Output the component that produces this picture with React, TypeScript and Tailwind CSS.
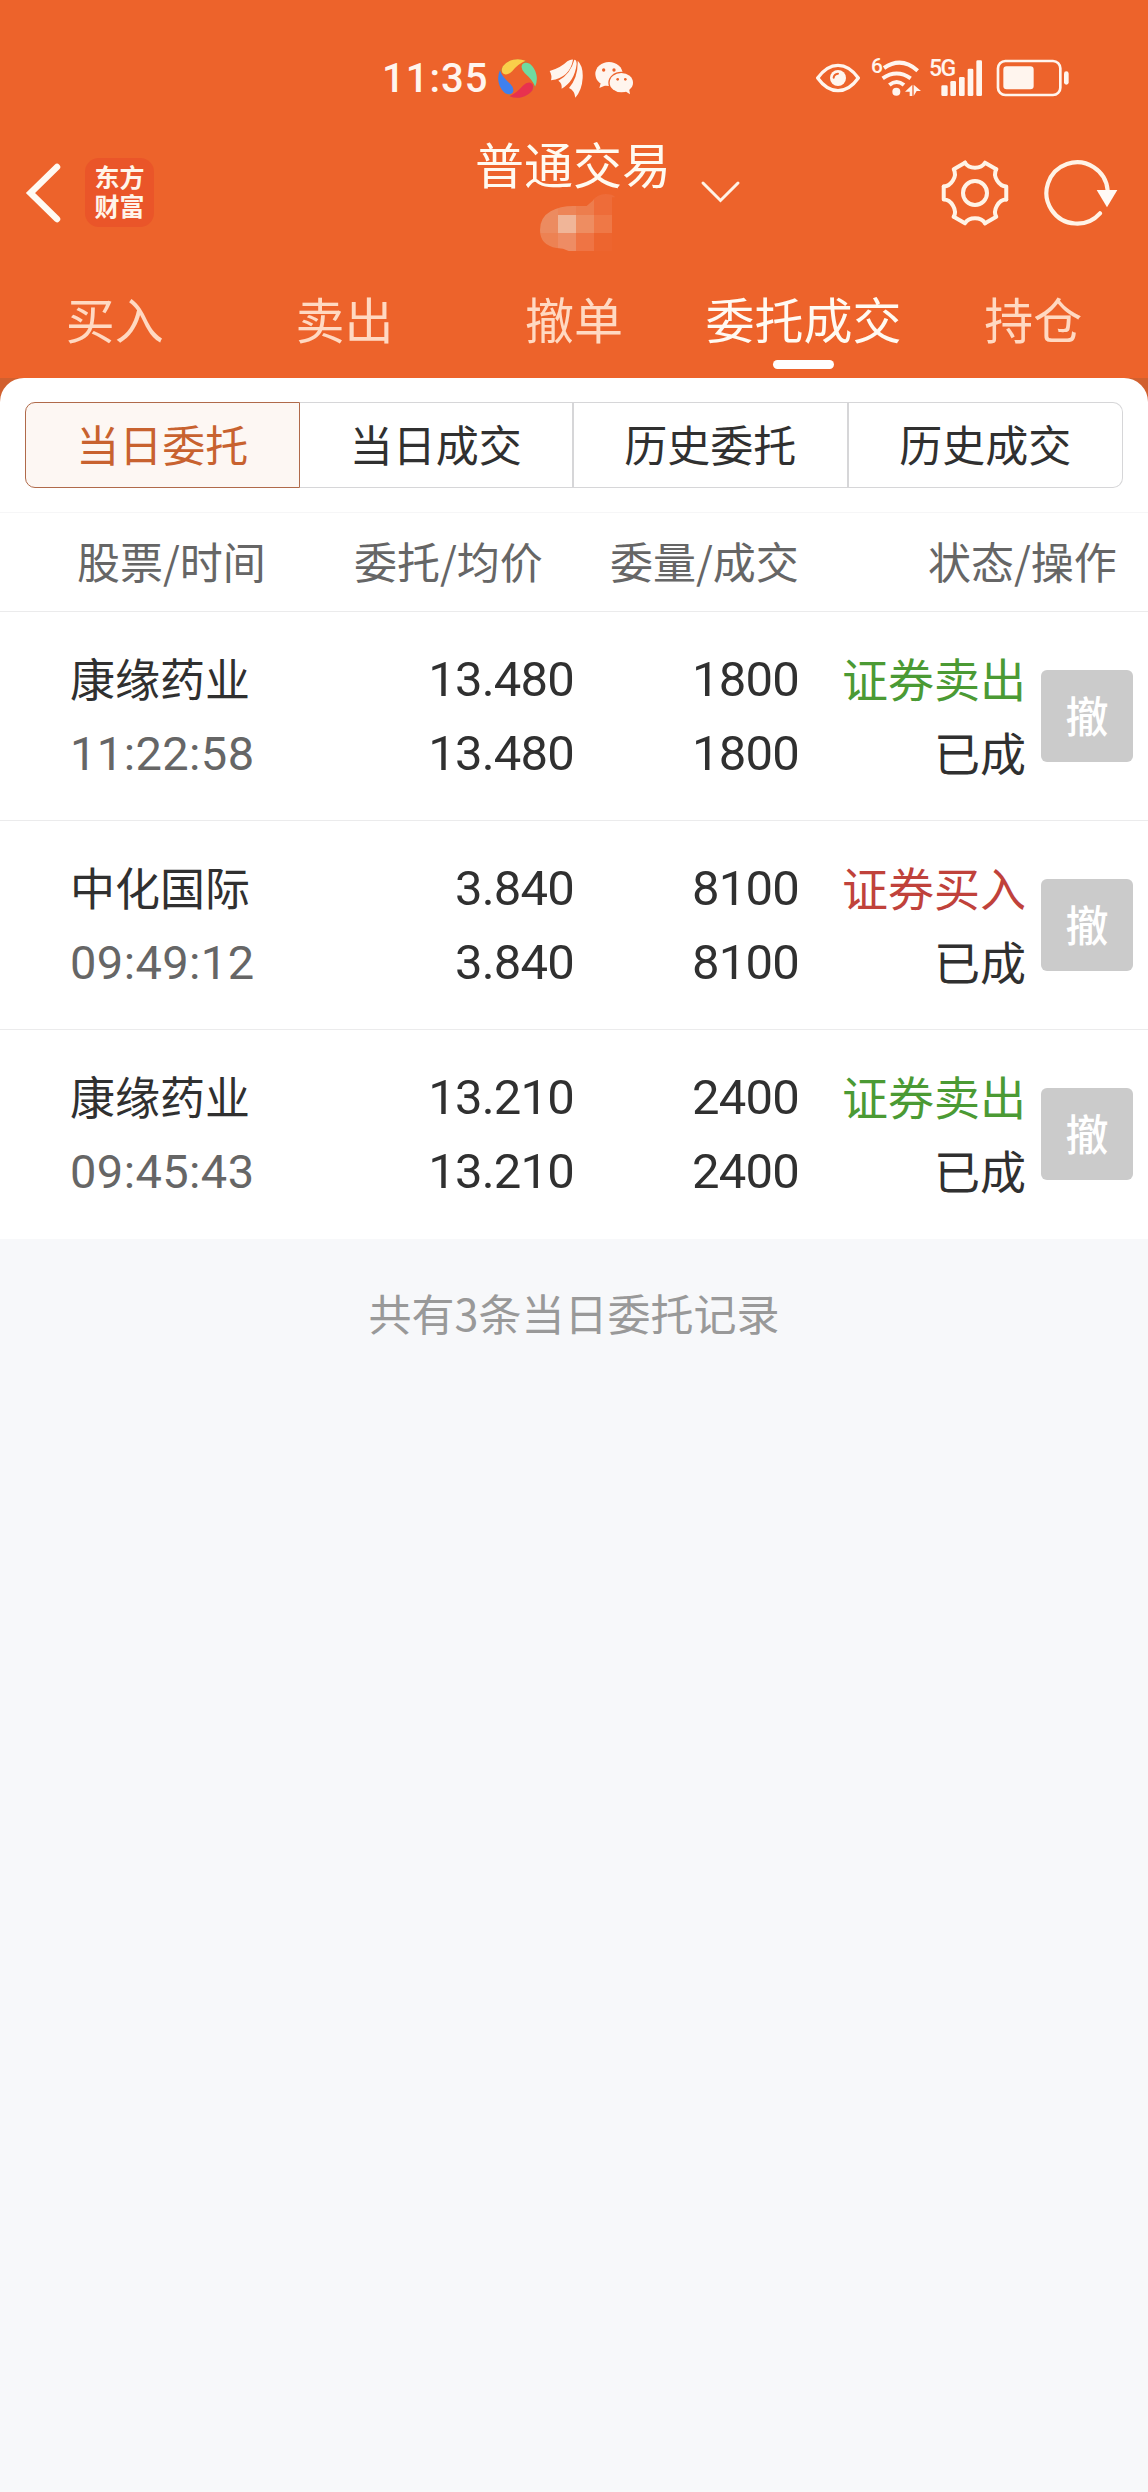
import React from 'react'

import clsx from 'clsx'

interface Order {
  name: string
  time: string
  price: string
  avgPrice: string
  amount: string
  filled: string
  side: 'sell' | 'buy'
  status: string
}

const TABS = ['买入', '卖出', '撤单', '委托成交', '持仓']
const SEGMENTS = ['当日委托', '当日成交', '历史委托', '历史成交']

const ORDERS: Order[] = [
  {
    name: '康缘药业',
    time: '11:22:58',
    price: '13.480',
    avgPrice: '13.480',
    amount: '1800',
    filled: '1800',
    side: 'sell',
    status: '已成'
  },
  {
    name: '中化国际',
    time: '09:49:12',
    price: '3.840',
    avgPrice: '3.840',
    amount: '8100',
    filled: '8100',
    side: 'buy',
    status: '已成'
  },
  {
    name: '康缘药业',
    time: '09:45:43',
    price: '13.210',
    avgPrice: '13.210',
    amount: '2400',
    filled: '2400',
    side: 'sell',
    status: '已成'
  }
]

function SwirlIcon() {
  const petal =
    'M24 -53 A58 58 0 0 0 -44 -37 Q-51 -20 -42 -14 Q-30 -8 -16 -22 Q4 -45 24 -53Z'
  return (
    <svg width="39" height="39" viewBox="-58.5 -58.5 117 117">
      <circle r="55" fill="none" stroke="#c9753a" strokeWidth="5" />
      <path d={petal} fill="#f9cf4a" />
      <path d={petal} fill="#6fdba0" transform="rotate(90)" />
      <path d={petal} fill="#e8314f" transform="rotate(180)" />
      <path d={petal} fill="#3f80ee" transform="rotate(270)" />
    </svg>
  )
}

function WingIcon() {
  return (
    <svg width="34" height="39" viewBox="537 41 102 117" fill="#fff5ee">
      <path d="M539 77 Q572 68 592 48 Q602 42 609 43 Q600 96 543 105 Q547 91 539 77Z" />
      <path d="M613 43 Q620 43 620 56 Q614 108 575 130 Q577 114 565 106 Q602 86 613 43Z" />
      <path d="M623 46 Q640 62 638 98 Q636 134 616 157 Q614 136 597 128 Q625 96 623 46Z" />
    </svg>
  )
}

function WechatIcon() {
  return (
    <svg width="39" height="34" viewBox="674 48 117 102" fill="#fff5ee">
      <ellipse cx="716" cy="87" rx="41" ry="36" />
      <path d="M692 112 L687 129 L710 119Z" />
      <ellipse cx="753" cy="113" rx="39" ry="33" fill="#ed632b" />
      <ellipse cx="753" cy="113" rx="35" ry="29" />
      <path d="M765 139 L779 148 L776 130Z" />
      <circle cx="700" cy="75" r="5" fill="#ed632b" />
      <circle cx="731" cy="75" r="5" fill="#ed632b" />
      <circle cx="742" cy="103" r="4" fill="#ed632b" />
      <circle cx="765" cy="103" r="4" fill="#ed632b" />
    </svg>
  )
}

function EyeIcon() {
  return (
    <svg width="44" height="30" viewBox="48 55 132 90">
      <path
        d="M53 100 Q80 62 114 62 Q148 62 175 100 Q148 138 114 138 Q80 138 53 100Z"
        fill="none"
        stroke="#fff5ee"
        strokeWidth="10"
        strokeLinejoin="round"
      />
      <circle cx="114" cy="100" r="24" fill="#fff5ee" />
      <path
        d="M101 99 Q102 88 114 87"
        fill="none"
        stroke="#ed632b"
        strokeWidth="6"
        strokeLinecap="round"
      />
    </svg>
  )
}

function WifiIcon() {
  return (
    <svg width="40" height="38" viewBox="242 39 120 114">
      <g fill="none" stroke="#fff5ee" strokeWidth="12">
        <path d="M251 66 Q303 30 352 74" />
        <path d="M247 97 Q289 68 331 97" />
        <path d="M267 117 Q289 99 311 117" />
      </g>
      <circle cx="288" cy="137" r="12" fill="#fff5ee" />
      <path
        d="M336 116 V150 H328 V137 H314Z M340 116 L362 135 H349 L340 150Z"
        fill="#fff5ee"
      />
    </svg>
  )
}

function SignalIcon() {
  return (
    <svg width="42" height="38" viewBox="425 39 126 114" fill="#fff5ee">
      <rect x="426" y="118" width="19" height="32" rx="4" />
      <rect x="453" y="105" width="17" height="45" rx="4" />
      <rect x="479" y="93" width="17" height="57" rx="4" />
      <rect x="505" y="68" width="17" height="82" rx="4" />
      <rect x="531" y="43" width="17" height="107" rx="4" />
    </svg>
  )
}

function BatteryIcon() {
  return (
    <svg width="74" height="38" viewBox="589 41 222 114">
      <rect
        x="595"
        y="47"
        width="187"
        height="102"
        rx="22"
        fill="none"
        stroke="#fff5ee"
        strokeWidth="8"
      />
      <rect x="611" y="63" width="91" height="69" rx="10" fill="#fff5ee" />
      <rect x="793" y="78" width="14" height="40" rx="7" fill="#fff5ee" />
    </svg>
  )
}

function GearIcon() {
  const tooth = 'M-30 -91 C-18 -71 18 -71 30 -91 L63.8 -71.5'
  return (
    <svg
      width="70"
      height="70"
      viewBox="-105 -105 210 210"
      fill="none"
      stroke="#fff3e6"
      strokeWidth="12"
      strokeLinejoin="round"
      strokeLinecap="round"
    >
      {[0, 60, 120, 180, 240, 300].map(angle => (
        <path d={tooth} key={angle} transform={`rotate(${angle})`} />
      ))}
      <circle r="36" />
    </svg>
  )
}

function RefreshIcon() {
  return (
    <svg width="76" height="70" viewBox="-105 -105 228 210">
      <path
        d="M92 -8 A92 92 0 1 0 69 61"
        fill="none"
        stroke="#fff3e6"
        strokeWidth="12.5"
        strokeLinecap="round"
      />
      <path d="M59 -9 H121 L90 43Z" fill="#fffaf5" />
    </svg>
  )
}

// pixelated account number under the title
function MaskedAccount() {
  return (
    <svg className="block" width="80" height="57" viewBox="0 0 240 171">
      <defs>
        <clipPath id="mask">
          <path d="M0 108 Q0 70 32 52 Q60 36 100 36 H140 L158 20 Q172 0 196 0 Q218 0 226 10 H216 V171 H86 Q70 162 50 162 Q0 154 0 108Z" />
        </clipPath>
      </defs>
      <g clipPath="url(#mask)">
        <rect width="54" height="117" fill="#ec8b60" />
        <rect x="54" width="54" height="63" fill="#ed8558" />
        <rect x="108" width="54" height="63" fill="#ed7d4d" />
        <rect x="162" width="66" height="63" fill="#ee6c39" />
        <rect x="54" y="63" width="54" height="54" fill="#f0b598" />
        <rect x="108" y="63" width="54" height="54" fill="#ee8d61" />
        <rect x="162" y="63" width="54" height="54" fill="#ef7846" />
        <rect y="117" width="54" height="54" fill="#ed8253" />
        <rect x="54" y="117" width="54" height="54" fill="#ee8c64" />
        <rect x="108" y="117" width="54" height="54" fill="#ef7444" />
        <rect x="162" y="117" width="54" height="54" fill="#ed652f" />
      </g>
    </svg>
  )
}

function StatusBar() {
  return (
    <div className="flex h-[126px] items-center pt-[30px] pl-[382px] font-[Roboto,sans-serif] text-[#fff5ee]">
      <span className="w-[116px] pt-0.5 text-[40px] leading-none font-medium tracking-[1px]">
        11:35
      </span>
      <SwirlIcon />
      <span className="ml-3">
        <WingIcon />
      </span>
      <span className="ml-3">
        <WechatIcon />
      </span>
      <span className="ml-[182px]">
        <EyeIcon />
      </span>
      <span className="ml-[11px] w-[10px] pb-6 text-[21px] leading-none font-medium">
        6
      </span>
      <WifiIcon />
      <span className="-mr-3 ml-2 w-6 pb-5 text-[23px] leading-none font-medium tracking-[-1.5px]">
        5G
      </span>
      <SignalIcon />
      <span className="ml-[13px]">
        <BatteryIcon />
      </span>
    </div>
  )
}

function TitleBar() {
  return (
    <div className="grid h-[134px] grid-cols-[1fr_196px_1fr] items-start">
      <div className="flex items-center pt-8 pl-6">
        <svg
          width="38"
          height="62"
          viewBox="0 0 38 62"
          fill="none"
          stroke="#fffaf2"
          strokeWidth="6.5"
        >
          <path d="M33 5 L6.5 31 L33 57" strokeLinecap="round" />
        </svg>
        <div className="ml-[23px] flex h-[69px] w-[69px] items-center justify-center rounded-[14px] bg-[#ea5529] pb-1">
          <span className="w-[50px] text-[25px] leading-[29px] font-bold break-all text-[#fff5ea]">
            东方财富
          </span>
        </div>
      </div>
      <div className="flex flex-col items-center">
        <h1 className="mt-1.5 -ml-0.5 text-[49px] leading-[62px] whitespace-nowrap text-[#fffaf0]">
          普通交易
        </h1>
        <div className="ml-3">
          <MaskedAccount />
        </div>
      </div>
      <div className="flex items-center pt-8">
        <svg
          className="-mt-0.5 ml-7"
          width="41"
          height="24"
          viewBox="0 0 41 24"
          fill="none"
          stroke="#fff3e6"
          strokeWidth="3"
        >
          <path d="M3 3 L20.5 20.5 L38 3" strokeLinecap="round" />
        </svg>
        <span className="ml-[199px]">
          <GearIcon />
        </span>
        <span className="ml-8">
          <RefreshIcon />
        </span>
      </div>
    </div>
  )
}

function Tabs() {
  return (
    <nav className="grid h-[118px] grid-cols-5">
      {TABS.map(tab => {
        const active = tab === '委托成交'
        return (
          <div
            className={clsx(
              'flex flex-col items-center pt-[26px] text-[49px] leading-[64px] whitespace-nowrap',
              active ? 'text-[#fffaf2]' : 'text-[#ffd9c2]'
            )}
            key={tab}
          >
            {tab}
            {active && (
              <span className="mt-2.5 h-[9px] w-[61px] rounded-full bg-white" />
            )}
          </div>
        )
      })}
    </nav>
  )
}

function Segments() {
  return (
    <div className="mx-[25px] grid h-[86px] grid-cols-4">
      {SEGMENTS.map((label, i) => (
        <div
          className={clsx(
            'flex items-center justify-center pb-[3px] text-[43px] leading-none',
            i === 0
              ? 'rounded-l-[10px] border border-[#b06a4a] bg-[#fdf7f3] text-[#c8622f]'
              : 'border-y border-[#d6d6d8] text-[#303030]',
            (i === 1 || i === 2) && 'border-r-2',
            i === 3 && 'rounded-r-[10px] border-r'
          )}
          key={label}
        >
          {label}
        </div>
      ))}
    </div>
  )
}

function OrderRow({ order }: { order: Order }) {
  return (
    <div className="flex h-[209px] border-b border-[#ebebec] pt-[31px] pr-[15px] pl-[70px] leading-[74px] whitespace-nowrap text-[#303030] last:border-transparent">
      <div className="w-[230px]">
        <p className="-mt-0.5 mb-0.5 text-[45px]">{order.name}</p>
        <p className="font-[Roboto,sans-serif] text-[47px] tracking-[0.4px] text-[#666]">
          {order.time}
        </p>
      </div>
      <div className="w-[274px] text-right font-[Roboto,sans-serif] text-[49px] tracking-[-0.8px]">
        <p>{order.price}</p>
        <p>{order.avgPrice}</p>
      </div>
      <div className="w-[225px] text-right font-[Roboto,sans-serif] text-[49px] tracking-[-0.8px]">
        <p>{order.amount}</p>
        <p>{order.filled}</p>
      </div>
      <div className="-mt-[3px] w-[227px] text-right text-[46px]">
        <p
          className={order.side === 'sell' ? 'text-[#4b9a34]' : 'text-[#c0423b]'}
        >
          {order.side === 'sell' ? '证券卖出' : '证券买入'}
        </p>
        <p>{order.status}</p>
      </div>
      <button className="mt-[27px] ml-[15px] h-[92px] w-[92px] rounded-md bg-[#cbcbcb] pb-1 text-[43px] leading-[88px] font-medium text-white">
        撤
      </button>
    </div>
  )
}

export default function App() {
  return (
    <div className="min-h-[2492px] w-[1148px] overflow-hidden bg-[#f7f8fa] font-['Noto_Sans_CJK_SC',sans-serif]">
      <header className="bg-[#ed632b]">
        <StatusBar />
        <TitleBar />
        <Tabs />
      </header>
      <div className="bg-[#d1602f]">
        <main className="rounded-t-[24px] bg-white pt-6">
          <Segments />
          <div className="mt-6 flex h-[100px] border-y border-[#ebebec] border-t-[#f6f6f7] text-[43px] leading-[95px] whitespace-nowrap text-[#666]">
            <span className="ml-[77px] w-[277px]">股票/时间</span>
            <span className="w-[256px]">委托/均价</span>
            <span className="w-[318px]">委量/成交</span>
            <span>状态/操作</span>
          </div>
          {ORDERS.map(order => (
            <OrderRow key={order.time} order={order} />
          ))}
        </main>
      </div>
      <p className="mt-[38px] text-center text-[43px] leading-[70px] text-[#999]">
        共有3条当日委托记录
      </p>
    </div>
  )
}
